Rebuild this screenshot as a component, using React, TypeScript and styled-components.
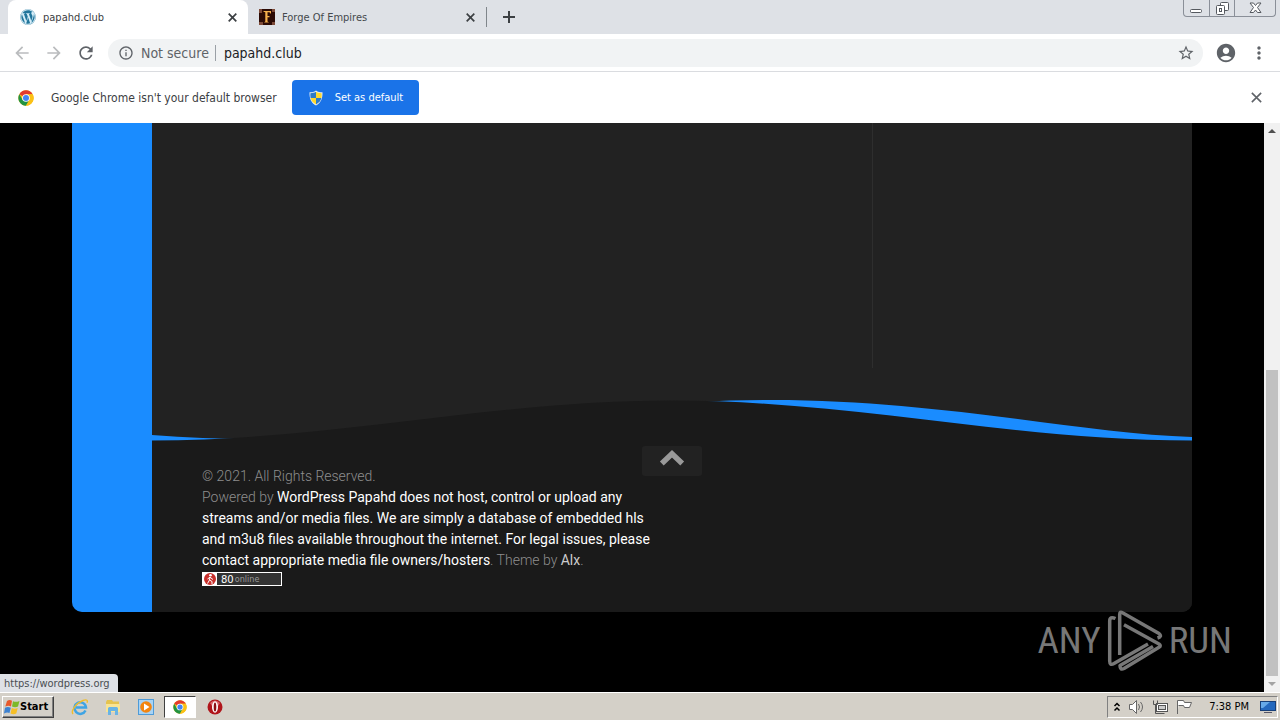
import React from "react";
import styled, { createGlobalStyle } from "styled-components";
import {
  MdAccountCircle,
  MdArrowBack,
  MdArrowForward,
  MdInfoOutline,
  MdMoreVert,
  MdRefresh,
  MdStarBorder,
} from "react-icons/md";
import { FaWordpress } from "react-icons/fa";

const ui = `"DejaVu Sans Condensed", Tahoma, "Noto Sans", sans-serif`;
const blue = "#1a8cff";

const GlobalStyle = createGlobalStyle`
  * { box-sizing: border-box; }
  body { margin: 0; font-family: ${ui}; font-size: 12px; background: #000; }
  button { font: inherit; border: 0; padding: 0; background: none; cursor: pointer; }
  a { text-decoration: none; }
  svg { display: block; flex: none; }
`;

const Desktop = styled.div`
  display: flex;
  flex-direction: column;
  min-height: 100vh;
`;

const TabStrip = styled.header`
  display: flex;
  height: 34px;
  padding-left: 8px;
  background: #dee1e6;
`;

const Tab = styled.div<{ $active?: boolean }>`
  display: flex;
  align-items: center;
  gap: 7px;
  width: ${(p) => (p.$active ? 240 : 238)}px;
  padding: 0 11px 0 ${(p) => (p.$active ? 12 : 11)}px;
  border-radius: 8px 8px 0 0;
  background: ${(p) => (p.$active ? "#fff" : "transparent")};
  color: ${(p) => (p.$active ? "#3c4043" : "#45494d")};
  font-size: 11px;
`;

const TabTitle = styled.span`
  flex: 1;
  white-space: nowrap;
`;

const IconButton = styled.button<{ $color?: string }>`
  display: flex;
  align-items: center;
  justify-content: center;
  color: ${(p) => p.$color ?? "#5f6368"};
`;

const TabDivider = styled.span`
  width: 1px;
  height: 20px;
  margin: 7px 16px 0 0;
  background: #80868b;
`;

const WindowButtons = styled.div`
  display: flex;
  height: 17px;
  margin: 0 4px 0 auto;
  border: 1px solid #8a8f98;
  border-top: 0;
  border-radius: 0 0 4px 4px;
`;

const WindowButton = styled.button<{ $wide?: boolean }>`
  display: flex;
  align-items: center;
  justify-content: center;
  width: ${(p) => (p.$wide ? 41 : 25)}px;
  & + & { border-left: 1px solid #8a8f98; }
`;

const Toolbar = styled.nav`
  display: flex;
  align-items: center;
  height: 38px;
  padding: 0 11px 0 12px;
  gap: 12px;
  background: #fff;
  border-bottom: 1px solid #dadce0;
`;

const Omnibox = styled.div`
  display: flex;
  flex: 1;
  align-items: center;
  height: 28px;
  padding: 0 8px 0 10px;
  border-radius: 14px;
  background: #f1f3f4;
  color: #5f6368;
  font-size: 14px;
`;

const Security = styled.span`
  margin-left: 7px;
  padding-right: 6px;
  border-right: 1px solid #9aa0a6;
  line-height: 16px;
`;

const Address = styled.input`
  flex: 1;
  min-width: 0;
  margin-left: 8px;
  padding: 0;
  border: 0;
  outline: 0;
  background: transparent;
  color: #202124;
  font: 14px ${ui};
`;

const InfoBar = styled.section`
  display: flex;
  align-items: center;
  height: 51px;
  padding: 0 18px 0 18px;
  background: #fff;
  color: #3c4043;
`;

const InfoText = styled.span`
  margin: 0 15px 0 17px;
`;

const DefaultButton = styled.button`
  && {
    display: flex;
    align-items: center;
    gap: 11px;
    height: 35px;
    padding: 0 16px;
    border-radius: 4px;
    background: #1a73e8;
    color: #fff;
    font-size: 11px;
  }
`;

const CloseSlot = styled.div`
  margin-left: auto;
`;

const Viewport = styled.div`
  position: relative;
  display: flex;
  flex: 1;
  background: #000;
`;

const Page = styled.div`
  flex: 1;
  min-width: 0;
  padding: 0 72px 80px;
`;

const Wrapper = styled.div`
  display: flex;
  max-width: 1120px;
  height: 100%;
  margin: 0 auto;
  overflow: hidden;
  border-radius: 0 0 10px 10px;
  background: #222;
`;

const SideStripe = styled.aside`
  flex: none;
  width: 80px;
  background: ${blue};
`;

const Main = styled.div`
  display: flex;
  flex: 1;
  flex-direction: column;
  min-width: 0;
`;

const Columns = styled.main`
  display: grid;
  flex: 1;
  grid-template-columns: 1fr 320px;
  padding-bottom: 32px;
`;

const Secondary = styled.div`
  min-height: 244px;
  border-left: 1px solid #2e2e2e;
`;

const Wave = styled.svg`
  width: 100%;
  height: 41px;
`;

const Footer = styled.footer`
  padding: 5px 50px 26px;
  background: #1a1a1a;
`;

const BackToTop = styled.button`
  && {
    display: flex;
    justify-content: center;
    width: 60px;
    height: 30px;
    margin: 0 auto -10px;
    padding-top: 3px;
    border-radius: 3px;
    background: #222;
    color: #999;
  }
`;

const Copyright = styled.div`
  width: 48%;
  color: #8e8e8e;
  font: 300 14px/21px Roboto, sans-serif;
  p { margin: 0; }
`;

const FooterLink = styled.a<{ $dim?: boolean }>`
  color: ${(p) => (p.$dim ? "#ccc" : "#fff")};
  font-weight: 400;
`;

const Counter = styled.a`
  display: flex;
  align-items: center;
  width: 80px;
  height: 14px;
  margin-top: 1px;
  border: 1px solid #fff;
  background: #333;
  color: #999;
  font: 9px ${ui};
`;

const Count = styled.b`
  margin: 0 1px 0 4px;
  color: #fff;
  font: 10px "DejaVu Sans", sans-serif;
`;

const ScrollBar = styled.div`
  display: flex;
  flex-direction: column;
  align-items: center;
  justify-content: space-between;
  width: 16px;
  background: #f1f1f1;
`;

const ScrollButton = styled.button`
  && { padding: 6px 4px; }
`;

const ScrollTrack = styled.div`
  display: flex;
  flex: 1;
  align-items: flex-end;
`;

const Thumb = styled.div`
  width: 12px;
  height: 57%;
  background: #c1c1c1;
`;

const StatusBubble = styled.div`
  position: absolute;
  bottom: 0;
  left: 0;
  height: 18px;
  padding: 0 8px 0 4px;
  border-radius: 0 4px 0 0;
  background: #dee1e6;
  color: #4a4e52;
  font-size: 11px;
  line-height: 19px;
`;

const Watermark = styled.div`
  position: absolute;
  right: 48px;
  bottom: 20px;
  display: flex;
  align-items: center;
  gap: 6px;
  color: #777;
  font: 37px/62px "Roboto Condensed", "Liberation Sans Narrow", "Liberation Sans", sans-serif;
`;

const Taskbar = styled.footer`
  display: flex;
  align-items: center;
  height: 28px;
  padding: 0 2px;
  border-top: 1px solid #fff;
  background: #d4d0c8;
`;

const StartButton = styled.button`
  && {
    display: flex;
    align-items: center;
    width: 52px;
    height: 22px;
    margin-right: 9px;
    padding-left: 1px;
    border: 1px solid;
    border-color: #fff #404040 #404040 #fff;
    box-shadow: inset -1px -1px #808080;
    color: #000;
    font: bold 11px ${ui};
  }
`;

const TaskButton = styled.button<{ $pressed?: boolean }>`
  && {
    display: flex;
    align-items: center;
    justify-content: center;
    width: ${(p) => (p.$pressed ? 32 : 29)}px;
    height: 22px;
    margin: 0 2px;
    border: 1px solid;
    border-color: ${(p) => (p.$pressed ? "#404040 #fff #fff #404040" : "transparent")};
    background: ${(p) => (p.$pressed ? "#fff" : "transparent")};
  }
`;

const Tray = styled.div`
  display: flex;
  align-items: center;
  gap: 7px;
  height: 22px;
  margin-left: auto;
  padding: 0 1px 0 5px;
  border: 1px solid;
  border-color: #808080 #fff #fff #808080;
  color: #000;
  font-size: 11px;
`;

const Clock = styled.time`
  margin: 0 4px 0 9px;
  white-space: nowrap;
`;

const Cross = ({ size = 9 }: { size?: number }) => (
  <svg width={size} height={size} viewBox="0 0 9 9" stroke="currentColor" strokeWidth={size > 9 ? 1.3 : 1.7} aria-hidden="true">
    <path d="M.7.7l7.600 7.600M8.300.7.7 8.300" />
  </svg>
);

const Plus = () => (
  <svg width="12" height="12" stroke="currentColor" strokeWidth="2" aria-hidden="true">
    <path d="M6 0v12M0 6h12" />
  </svg>
);

const Chevron = () => (
  <svg width="26" height="18" viewBox="0 0 26 18" fill="none" stroke="currentColor" strokeWidth="5.500" aria-hidden="true">
    <path d="M2.800 14.500 13 4.800 23.200 14.500" />
  </svg>
);

const WordPressIcon = () => (
  <svg width="16" height="16" viewBox="0 0 16 16" aria-hidden="true">
    <circle cx="8" cy="8" r="7.500" fill="#d5edf8" />
    <FaWordpress size={16} color="#21759b" />
  </svg>
);

const ChromeLogo = ({ size = 16 }: { size?: number }) => (
  <svg width={size} height={size} viewBox="0 0 48 48" aria-hidden="true">
    <circle cx="24" cy="24" r="23" fill="#fbc116" />
    <path d="M24 24 4.100 12.500A23 23 0 0 1 43.900 12.500H24Z" fill="#e33b2e" />
    <path d="M4.100 12.500A23 23 0 0 0 24 47L34 29.800 24 24 14 29.800Z" fill="#229342" />
    <path d="M43.900 12.500H24V24l10 5.800L24 47A23 23 0 0 0 43.900 12.500Z" fill="#fbc116" />
    <circle cx="24" cy="24" r="11.500" fill="#fff" />
    <circle cx="24" cy="24" r="9" fill="#4285f4" />
  </svg>
);

const Shield = () => (
  <svg width="16" height="16" viewBox="0 0 16 16" aria-hidden="true">
    <path d="M8 0.500C6 2 4 2.300 1.500 2.300 1.300 8.500 3 13 8 15.500 13 13 14.700 8.500 14.500 2.300 12 2.300 10 2 8 .5Z" fill="#e8eef5" />
    <path d="M8 1.800V8H2.600C2.300 6.300 2.300 5 2.400 3.200 4.500 3.200 6.300 2.900 8 1.800Z" fill="#2e7bc8" />
    <path d="M8 1.800V8h5.400c.3-1.700.3-3 .2-4.800C11.500 3.200 9.700 2.900 8 1.800Z" fill="#ffd92e" />
    <path d="M2.600 8H8v6.400C5 12.800 3.300 10.800 2.600 8Z" fill="#ffd92e" />
    <path d="M13.400 8H8v6.400c3-1.600 4.700-3.600 5.400-6.400Z" fill="#2e7bc8" />
  </svg>
);

const ForgeIcon = () => (
  <svg width="16" height="16" viewBox="0 0 16 16" aria-hidden="true">
    <rect width="16" height="16" fill="#2b0a04" />
    <path d="M0 0h3v4H0zM13 0h3v3h-3zM0 13h4v3H0zM13 13h3v3h-3z" fill="#7d4a38" />
    <path d="M4.500 2H12v3l-1.500-1.700H8.500V7h2v1.300h-2v4.200L10 13.500H5L6.300 12.500V3.300L4.500 2.800Z" fill="#f5b04c" />
  </svg>
);

const WindowsFlag = () => (
  <svg width="16" height="16" viewBox="0 0 16 16" aria-hidden="true">
    <path d="M3 2C5 .7 6.500 1 8 1.800L7 7.400C5.300 6.500 3.600 6.500 1.300 7.500Z" fill="#e8592b" />
    <path d="M9 2.200c2 .9 4 .8 6.500-.3L14 7.500c-2 1-4 .9-6 0Z" fill="#7db928" />
    <path d="M1 8.700c2-1 3.700-1 5.800 0L5.500 14C4 13.200 2.200 13.300 0 14.400Z" fill="#3e82d0" />
    <path d="M7.800 9c2 .9 3.900 1 5.900 0l-1.400 5.500c-1.800 1-3.900.9-5.800 0Z" fill="#f6bf26" />
  </svg>
);

const ExplorerIcon = () => (
  <svg width="18" height="18" viewBox="0 0 18 18" fill="none" aria-hidden="true">
    <path d="M14.500 12.500A5.800 5.800 0 1 1 15 9.500H5" stroke="#3fa4e4" strokeWidth="2.500" />
    <path d="M2 16C-.5 13 5 5 12 2.500c4-1.500 5 0 4 2.300" stroke="#f0bd2c" strokeWidth="1.400" />
  </svg>
);

const FolderIcon = () => (
  <svg width="18" height="18" viewBox="0 0 18 18" aria-hidden="true">
    <path d="M2 4l1-2h5l1 1.500h6V9H2Z" fill="#e5c34f" />
    <path d="M2 6h14v8H2Z" fill="#f9e493" />
    <path d="M4 17V10.500Q4 9 5.500 9h7Q14 9 14 10.500V17h-3v-4H7v4Z" fill="#69b4e4" />
  </svg>
);

const PlayerIcon = () => (
  <svg width="16" height="16" viewBox="0 0 16 16" aria-hidden="true">
    <rect x="0.500" y="0.500" width="15" height="15" fill="#a8d3f4" stroke="#4e9bd8" />
    <circle cx="8" cy="8" r="5.800" fill="#f3850f" />
    <path d="M6 4.500 11.500 8 6 11.500Z" fill="#fff" />
  </svg>
);

const OperaIcon = () => (
  <svg width="16" height="16" viewBox="0 0 16 16" aria-hidden="true">
    <circle cx="8" cy="8" r="7.500" fill="#b0151b" />
    <path d="M3 4Q8-1 13 4L11 7H5Z" fill="#d9656a" />
    <ellipse cx="8" cy="8" rx="3" ry="5.800" fill="#fff" />
    <ellipse cx="8" cy="8" rx="1.300" ry="4.600" fill="#8c0f14" />
  </svg>
);

const Triangle = ({ down }: { down?: boolean }) => (
  <svg width="8" height="4" viewBox="0 0 8 4" aria-hidden="true">
    <path d={down ? "M0 0h8L4 4Z" : "M0 4h8L4 0Z"} fill={down ? "#a3a3a3" : "#505050"} />
  </svg>
);

const PlayMark = () => (
  <svg width="56" height="62" viewBox="0 0 56 62" fill="none" stroke="currentColor" strokeWidth="3.500" strokeLinejoin="round" aria-hidden="true">
    <path d="M8.500 8.500Q2.700 6 2.700 11V51Q2.700 56 7 53.500L41 34" />
    <path d="M12.700 45V4.500Q12.700 1 15.500 2.700L52 23.500Q55.500 26.500 50.500 28" />
    <path d="M17 14.700 52 34Q54.500 35.700 52 37.300L17 58.500Q13 60.500 13 55.500L46 36.500" />
  </svg>
);

export default function App() {
  return (
    <Desktop>
      <GlobalStyle />
      <TabStrip>
        <Tab $active>
          <WordPressIcon />
          <TabTitle>papahd.club</TabTitle>
          <IconButton aria-label="Close tab" $color="#3c4043"><Cross /></IconButton>
        </Tab>
        <Tab>
          <ForgeIcon />
          <TabTitle>Forge Of Empires</TabTitle>
          <IconButton aria-label="Close tab" $color="#3c4043"><Cross /></IconButton>
        </Tab>
        <TabDivider />
        <IconButton aria-label="New tab" $color="#3c4043"><Plus /></IconButton>
        <WindowButtons>
          <WindowButton aria-label="Minimize">
            <svg width="13" height="13" fill="#fff" stroke="#55595f"><rect x="0.500" y="7.500" width="11" height="3" rx="1" /></svg>
          </WindowButton>
          <WindowButton aria-label="Restore">
            <svg width="13" height="13" fill="#fff" stroke="#55595f">
              <rect x="4.500" y="0.500" width="8" height="8" rx="1" />
              <rect x="0.500" y="3.500" width="8" height="9" rx="1" />
              <rect x="3.500" y="6.500" width="2" height="3" />
            </svg>
          </WindowButton>
          <WindowButton aria-label="Close" $wide>
            <svg width="13" height="12" fill="#fff" stroke="#55595f"><path d="M1 1h3.500L6.500 3.500 8.500 1H12L8.500 5.500 12 10.500H8.500L6.500 8 4.500 10.500H1L4.500 5.500Z" /></svg>
          </WindowButton>
        </WindowButtons>
      </TabStrip>

      <Toolbar>
        <IconButton aria-label="Back" $color="#babcbe"><MdArrowBack size={20} /></IconButton>
        <IconButton aria-label="Forward" $color="#babcbe"><MdArrowForward size={20} /></IconButton>
        <IconButton aria-label="Reload"><MdRefresh size={20} /></IconButton>
        <Omnibox>
          <MdInfoOutline size={16} />
          <Security>Not secure</Security>
          <Address aria-label="Address" defaultValue="papahd.club" />
          <IconButton aria-label="Bookmark"><MdStarBorder size={18} /></IconButton>
        </Omnibox>
        <IconButton aria-label="Profile"><MdAccountCircle size={22} /></IconButton>
        <IconButton aria-label="Menu"><MdMoreVert size={20} /></IconButton>
      </Toolbar>

      <InfoBar>
        <ChromeLogo />
        <InfoText>Google Chrome isn't your default browser</InfoText>
        <DefaultButton><Shield />Set as default</DefaultButton>
        <CloseSlot>
          <IconButton aria-label="Dismiss"><Cross size={11} /></IconButton>
        </CloseSlot>
      </InfoBar>

      <Viewport>
        <Page>
          <Wrapper>
            <SideStripe />
            <Main>
              <Columns>
                <div />
                <Secondary />
              </Columns>
              <Wave viewBox="0 0 1040 41" preserveAspectRatio="none" aria-hidden="true">
                <path d="M0 35C230 54 400 0 620 0C790 0 930 34 1040 37V41H0Z" fill={blue} />
                <path d="M0 40.500C180 40.500 340 0.500 520 0.500C700 0.500 860 40.500 1040 40.500V41H0Z" fill="#1a1a1a" />
              </Wave>
              <Footer>
                <BackToTop aria-label="Back to top"><Chevron /></BackToTop>
                <Copyright>
                  <p>© 2021. All Rights Reserved.</p>
                  <p>
                    Powered by <FooterLink href="https://wordpress.org">WordPress Papahd does not host, control or upload any streams and/or media files. We are simply a database of embedded hls and m3u8 files available throughout the internet. For legal issues, please contact appropriate media file owners/hosters</FooterLink>. Theme by <FooterLink $dim href="#alx">Alx</FooterLink>.
                  </p>
                </Copyright>
                <Counter href="#online">
                  <svg width="14" height="12" viewBox="0 0 14 12" aria-hidden="true">
                    <rect width="14" height="12" fill="#fff" />
                    <circle cx="7" cy="6" r="6" fill="#c9302c" />
                    <circle cx="7.500" cy="2.300" r="1.300" fill="#fff" />
                    <path d="M7 4 6.500 7 4.500 10.500M6.500 7 9 8.500V11M4.500 6 7 4.200 10 6.500" stroke="#fff" fill="none" />
                  </svg>
                  <Count>80</Count>online
                </Counter>
              </Footer>
            </Main>
          </Wrapper>
        </Page>
        <ScrollBar>
          <ScrollButton aria-label="Scroll up"><Triangle /></ScrollButton>
          <ScrollTrack><Thumb /></ScrollTrack>
          <ScrollButton aria-label="Scroll down"><Triangle down /></ScrollButton>
        </ScrollBar>
        <Watermark>ANY<PlayMark />RUN</Watermark>
        <StatusBubble>https://wordpress.org</StatusBubble>
      </Viewport>

      <Taskbar>
        <StartButton><WindowsFlag />Start</StartButton>
        <TaskButton aria-label="Internet Explorer"><ExplorerIcon /></TaskButton>
        <TaskButton aria-label="Files"><FolderIcon /></TaskButton>
        <TaskButton aria-label="Media Player"><PlayerIcon /></TaskButton>
        <TaskButton aria-label="Chrome" $pressed><ChromeLogo size={14} /></TaskButton>
        <TaskButton aria-label="Opera"><OperaIcon /></TaskButton>
        <Tray>
          <svg width="8" height="10" fill="none" stroke="#000" strokeWidth="1.500"><path d="M1.500 4 4 1.500 6.500 4M1.500 8.500 4 6l2.500 2.500" /></svg>
          <svg width="17" height="16" fill="#fff" stroke="#666"><path d="M1.500 5.500h3l4-4v13l-4-4h-3Z" /><path d="M10.500 5q2 3 0 6M12.500 3q4 5 0 10" fill="none" /></svg>
          <svg width="17" height="16" fill="#fff" stroke="#555"><rect x="4.500" y="4.500" width="11" height="8" /><path d="M1.500 1.500v4h4v-4M3.500 6v8.500h9" fill="none" /><rect x="6.500" y="6.500" width="7" height="4" fill="#ccc" /></svg>
          <svg width="17" height="16" fill="#fff" stroke="#666"><path d="M1.500 15V1.500h6l1 2h7l-2 5h-5l-1-2h-5" /></svg>
          <Clock>7:38 PM</Clock>
          <svg width="16" height="14" aria-hidden="true"><rect x="0.500" y="1.500" width="15" height="9" fill="#2468bd" stroke="#173f78" /><path d="M1 2h9L3 8H1Z" fill="#66a9e8" /><path d="M4 12h8v1H4Z" fill="#556" /></svg>
        </Tray>
      </Taskbar>
    </Desktop>
  );
}
